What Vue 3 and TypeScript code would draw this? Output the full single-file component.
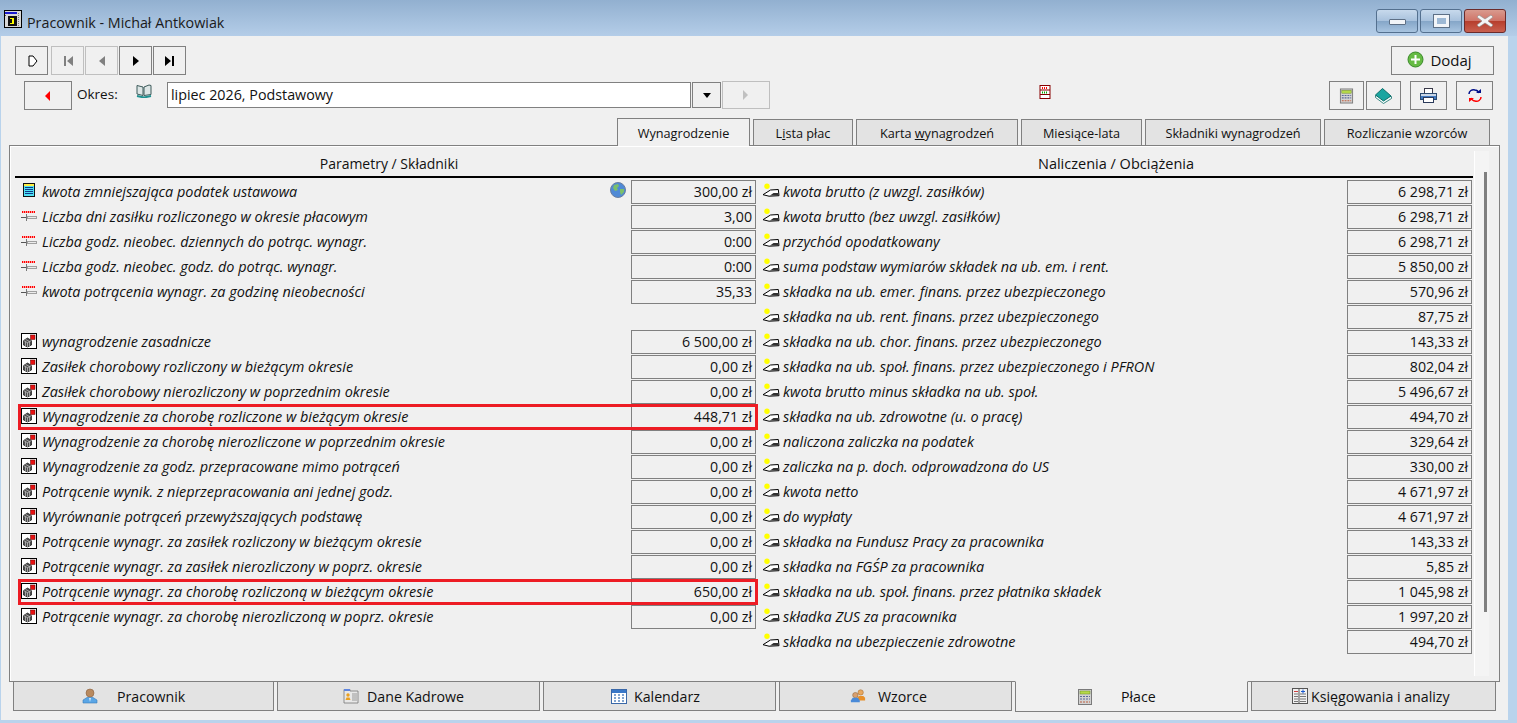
<script setup lang="ts">
interface Row {
  label: string;
  value: string;
  icon: string;
  mark?: boolean;
  globe?: boolean;
}

const navButtons = [
  { shape: 'M4 2h4l4 5-4 5H4z', outline: true, off: false },
  { shape: 'M3 2h2v10H3zM12 2v10L6 7z', off: true },
  { shape: 'M10 2v10L4 7z', off: true },
  { shape: 'M4 2v10l6-5z', off: false },
  { shape: 'M2 2v10l6-5zM9 2h2v10H9z', off: false },
];

const topTabs = [
  { before: 'Wynagrodzenie', u: '', after: '', width: 133, active: true },
  { before: 'L', u: 'i', after: 'sta płac', width: 100 },
  { before: 'Karta ', u: 'w', after: 'ynagrodzeń', width: 162 },
  { before: 'Miesiące-lata', u: '', after: '', width: 121 },
  { before: 'Składniki wynagrodzeń', u: '', after: '', width: 176 },
  { before: 'Rozliczanie wzorców', u: '', after: '', width: 166 },
];

const leftRows: (Row | null)[] = [
  { label: 'kwota zmniejszająca podatek ustawowa', value: '300,00 zł', icon: 'doc', globe: true },
  { label: 'Liczba dni zasiłku rozliczonego w okresie płacowym', value: '3,00', icon: 'param' },
  { label: 'Liczba godz. nieobec. dziennych do potrąc. wynagr.', value: '0:00', icon: 'param' },
  { label: 'Liczba godz. nieobec. godz. do potrąc. wynagr.', value: '0:00', icon: 'param' },
  { label: 'kwota potrącenia wynagr. za godzinę nieobecności', value: '35,33', icon: 'param' },
  null,
  { label: 'wynagrodzenie zasadnicze', value: '6 500,00 zł', icon: 'cube' },
  { label: 'Zasiłek chorobowy rozliczony w bieżącym okresie', value: '0,00 zł', icon: 'cube' },
  { label: 'Zasiłek chorobowy nierozliczony w poprzednim okresie', value: '0,00 zł', icon: 'cube' },
  { label: 'Wynagrodzenie za chorobę rozliczone w bieżącym okresie', value: '448,71 zł', icon: 'cube', mark: true },
  { label: 'Wynagrodzenie za chorobę nierozliczone w poprzednim okresie', value: '0,00 zł', icon: 'cube' },
  { label: 'Wynagrodzenie za godz. przepracowane mimo potrąceń', value: '0,00 zł', icon: 'cube' },
  { label: 'Potrącenie wynik. z nieprzepracowania ani jednej godz.', value: '0,00 zł', icon: 'cube' },
  { label: 'Wyrównanie potrąceń przewyższających podstawę', value: '0,00 zł', icon: 'cube' },
  { label: 'Potrącenie wynagr. za zasiłek rozliczony w bieżącym okresie', value: '0,00 zł', icon: 'cube' },
  { label: 'Potrącenie wynagr. za zasiłek nierozliczony w poprz. okresie', value: '0,00 zł', icon: 'cube' },
  { label: 'Potrącenie wynagr. za chorobę rozliczoną w bieżącym okresie', value: '650,00 zł', icon: 'cube', mark: true },
  { label: 'Potrącenie wynagr. za chorobę nierozliczoną w poprz. okresie', value: '0,00 zł', icon: 'cube' },
];

const rightRows: Row[] = [
  { label: 'kwota brutto (z uwzgl. zasiłków)', value: '6 298,71 zł', icon: 'hand' },
  { label: 'kwota brutto (bez uwzgl. zasiłków)', value: '6 298,71 zł', icon: 'hand' },
  { label: 'przychód opodatkowany', value: '6 298,71 zł', icon: 'hand' },
  { label: 'suma podstaw wymiarów składek na ub. em. i rent.', value: '5 850,00 zł', icon: 'hand' },
  { label: 'składka na ub. emer. finans. przez ubezpieczonego', value: '570,96 zł', icon: 'hand' },
  { label: 'składka na ub. rent. finans. przez ubezpieczonego', value: '87,75 zł', icon: 'hand' },
  { label: 'składka na ub. chor. finans. przez ubezpieczonego', value: '143,33 zł', icon: 'hand' },
  { label: 'składka na ub. społ. finans. przez ubezpieczonego i PFRON', value: '802,04 zł', icon: 'hand' },
  { label: 'kwota brutto minus składka na ub. społ.', value: '5 496,67 zł', icon: 'hand' },
  { label: 'składka na ub. zdrowotne (u. o pracę)', value: '494,70 zł', icon: 'hand' },
  { label: 'naliczona zaliczka na podatek', value: '329,64 zł', icon: 'hand' },
  { label: 'zaliczka na p. doch. odprowadzona do US', value: '330,00 zł', icon: 'hand' },
  { label: 'kwota netto', value: '4 671,97 zł', icon: 'hand' },
  { label: 'do wypłaty', value: '4 671,97 zł', icon: 'hand' },
  { label: 'składka na Fundusz Pracy za pracownika', value: '143,33 zł', icon: 'hand' },
  { label: 'składka na FGŚP za pracownika', value: '5,85 zł', icon: 'hand' },
  { label: 'składka na ub. społ. finans. przez płatnika składek', value: '1 045,98 zł', icon: 'hand' },
  { label: 'składka ZUS za pracownika', value: '1 997,20 zł', icon: 'hand' },
  { label: 'składka na ubezpieczenie zdrowotne', value: '494,70 zł', icon: 'hand' },
];

const bottomTabs = [
  { label: 'Pracownik', icon: 'person', width: 261, pad: 68, gap: 19 },
  { label: 'Dane Kadrowe', icon: 'card', width: 263, pad: 65, gap: 8 },
  { label: 'Kalendarz', icon: 'calendar', width: 233, pad: 67, gap: 7 },
  { label: 'Wzorce', icon: 'people', width: 233, pad: 70, gap: 12 },
  { label: 'Płace', icon: 'calc', width: 233, pad: 61, gap: 28, active: true },
  { label: 'Księgowania i analizy', icon: 'ledger', width: 245, pad: 40, gap: 3 },
];
</script>

<template>
  <div class="window">
    <svg class="sprites" width="0" height="0">
      <symbol id="doc" viewBox="0 0 14 14" shape-rendering="crispEdges">
        <rect x="1.500" y="0.500" width="11" height="13" fill="#4fe0f4" stroke="#111" />
        <rect x="2" y="1" width="10" height="2" fill="#ffee44" />
        <path d="M3 4.500h8M3 6.500h8M3 8.500h8M3 10.500h8" stroke="#103a8a" />
      </symbol>
      <symbol id="param" viewBox="0 0 16 16" shape-rendering="crispEdges">
        <rect x="1" y="2" width="13" height="2" fill="#ff9a9a" />
        <path
          d="M1 2h1v2H1zM3 2h1v2H3zM5 2h1v2H5zM7 2h1v2H7zM9 2h1v2H9zM11 2h1v2h-1zM13 2h1v2h-1z"
          fill="#ff0000"
        />
        <rect x="6.500" y="7.500" width="9" height="2" fill="#ececec" stroke="#a0a0a0" />
        <path d="M0 8.500h5" stroke="#555" />
        <path d="M5.500 5v7" stroke="#777" />
      </symbol>
      <symbol id="cube" viewBox="0 0 16 16">
        <rect x="0.500" y="0.500" width="15" height="15" fill="#fff" stroke="#000" />
        <path d="M2.500 7.500l4-2.500 4 2.500v4.500l-4 2-4-2z" fill="#4a4a4a" stroke="#000" stroke-width=".6" />
        <path d="M2.500 7.500l4 2.200 4-2.200M6.500 9.700v4.300M4.500 6.300l4 2.300M4.500 8.700v4.300M8.500 8.700v4.300" fill="none" stroke="#ddd" stroke-width=".6" />
        <rect x="9.500" y="2" width="4.500" height="4.500" fill="#e81010" stroke="#500" stroke-width=".5" />
      </symbol>
      <symbol id="hand" viewBox="0 0 18 16">
        <circle cx="5" cy="3.300" r="2.700" fill="#ffff00" />
        <path d="M1 11.700L8.500 7l7.800-.500.700 6.200-10 .500z" fill="#fff" stroke="#000" />
        <path d="M8 12.500h8.500V10h-5z" fill="#333" />
      </symbol>
      <symbol id="globe" viewBox="0 0 16 16">
        <circle cx="8" cy="8" r="7.500" fill="#4f8ad6" stroke="#6a7fa0" />
        <path d="M4 3l4-1 1 2-2 2 1 2-3 1-2-3zM10 7l4 0 0 3-3 3-1-3z" fill="#7cc06a" />
      </symbol>
      <symbol id="person" viewBox="0 0 16 16">
        <circle cx="8" cy="5" r="4" fill="#b98a5f" stroke="#8a6240" stroke-width=".6" />
        <path d="M1 15v-3l4-2.500h6l4 2.500v3z" fill="#5aa6e6" stroke="#3a7cb8" stroke-width=".6" />
        <path d="M7 10h2l-1 4z" fill="#d6ecfa" />
      </symbol>
      <symbol id="card" viewBox="0 0 16 16">
        <path d="M1 15V1.500h6V3h8v12z" fill="#e8e8e8" stroke="#777" stroke-width=".8" />
        <path d="M1 3V1h6v2z" fill="#5f86e0" />
        <circle cx="5" cy="7" r="1.700" fill="#eaa020" />
        <path d="M2.500 12l1-2.500h3l1 2.500z" fill="#eaa020" />
        <path d="M9 6h5M9 8h5M9 10h5M9 12h5" stroke="#999" />
      </symbol>
      <symbol id="calendar" viewBox="0 0 16 16">
        <rect x="0.500" y="1.500" width="15" height="14" fill="#fff" stroke="#3a68a8" />
        <rect x="1" y="2" width="14" height="3" fill="#3a78c8" />
        <path d="M3 7h2M7 7h2M11 7h2M3 10h2M7 10h2M11 10h2M3 13h2M7 13h2M11 13h2" stroke="#5a86c0" stroke-width="1.500" />
      </symbol>
      <symbol id="people" viewBox="0 0 18 16">
        <circle cx="12" cy="4" r="3" fill="#e8a860" stroke="#a06a30" stroke-width=".6" />
        <path d="M8 13v-3l2-2h5l2 2v3z" fill="#e8902a" />
        <circle cx="6" cy="7" r="3" fill="#d8a070" stroke="#906030" stroke-width=".6" />
        <path d="M1 15v-2l2-3h6l2 3v2z" fill="#4a8ad8" />
      </symbol>
      <symbol id="calc" viewBox="0 0 16 16">
        <rect x="1.500" y="0.500" width="13" height="15" fill="#d2d2d2" stroke="#7a7a7a" />
        <rect x="3" y="2" width="10" height="3" fill="#b5d94a" stroke="#6a8a20" stroke-width=".5" />
        <path d="M3 7.500h2M6 7.500h2M9 7.500h2M12 7.500h1M3 10h2M6 10h2M9 10h2M12 10h1" stroke="#5a6a9a" stroke-width="1.200" />
        <path d="M3 13h2M6 13h2M9 13h2M12 13h1" stroke="#c06040" stroke-width="1.200" />
      </symbol>
      <symbol id="ledger" viewBox="0 0 16 16">
        <rect x="0.500" y="0.500" width="15" height="15" fill="#f2f2f2" stroke="#555" />
        <path d="M2 3.500h4" stroke="#d04040" />
        <path d="M2 6h4M2 8.500h4M2 11h4M2 13.500h4M8 6h6M8 8.500h6M8 11h6M8 13.500h6" stroke="#777" />
        <path d="M7 1v14" stroke="#555" />
        <path d="M9 3.500h4M11 1.500v4" stroke="#1a5ad0" />
      </symbol>
    </svg>

    <header class="titlebar">
      <svg class="app-icon" width="18" height="18" viewBox="0 0 18 18">
        <rect x="0.500" y="0.500" width="17" height="17" fill="#d8d8d8" stroke="#000" />
        <rect x="1" y="2" width="12" height="2" fill="#1a1ad0" />
        <rect x="1" y="5" width="1" height="1" fill="#555" />
        <rect x="4" y="6" width="9" height="10" fill="#111" />
        <path d="M6 8h4v6H6v-1h2V9H6z" fill="#ff0" />
        <path d="M14.500 3v13" stroke="#777" stroke-dasharray="1 1" />
      </svg>
      <span class="title">Pracownik - Michał Antkowiak</span>
      <div class="caption-buttons">
        <button class="cap"><span class="cap-min"></span></button>
        <button class="cap"><span class="cap-max"></span></button>
        <button class="cap cap-close">
          <svg width="18" height="14" viewBox="0 0 18 14">
            <path d="M3 1l6 4 6-4 2 2-5 4 5 4-2 2-6-4-6 4-2-2 5-4-5-4z" fill="#f4f4f4" stroke="#8a8a8a" stroke-width=".6" />
          </svg>
        </button>
      </div>
    </header>

    <main class="client">
      <div class="toolbar-one">
        <div class="nav-group">
          <button v-for="(b, i) in navButtons" :key="i" class="btn nav-btn" :class="{ off: b.off }">
            <svg width="14" height="14" viewBox="0 0 14 14">
              <path :d="b.shape" :fill="b.outline ? '#fff' : b.off ? '#808080' : '#000'" :stroke="b.outline ? '#000' : 'none'" />
            </svg>
          </button>
        </div>
        <button class="btn add-btn">
          <svg width="17" height="17" viewBox="0 0 17 17">
            <circle cx="8.500" cy="8.500" r="7.500" fill="#66bb44" stroke="#3a8a2a" />
            <path d="M8.500 4v9M4 8.500h9" stroke="#fff" stroke-width="2" />
          </svg>
          Dodaj
        </button>
      </div>

      <div class="toolbar-two">
        <button class="btn back-btn">
          <svg width="8" height="12" viewBox="0 0 8 12"><path d="M6 1v10L1 6z" fill="#f00" /></svg>
        </button>
        <span class="period-label">Okres:</span>
        <svg class="book" width="16" height="14" viewBox="0 0 16 14">
          <path d="M1 1.500l6 1.500v8.500l-6-1.500zM8 3l5-2 2 .5v9L8 11.500z" fill="#dde6e6" stroke="#3c5a5a" />
          <path d="M1 12l7 1.500 7-1.500" stroke="#1f9090" stroke-width="2" fill="none" />
        </svg>
        <div class="combo-field">lipiec 2026, Podstawowy</div>
        <button class="btn combo-arrow">
          <svg width="8" height="5" viewBox="0 0 8 5"><path d="M0 0h8L4 5z" fill="#000" /></svg>
        </button>
        <button class="btn next-btn off">
          <svg width="6" height="12" viewBox="0 0 6 12"><path d="M0 1v10l5-5z" fill="#c0c0c0" /></svg>
        </button>
        <svg class="abacus" width="12" height="14" viewBox="0 0 12 14">
          <rect x="1" y="0.500" width="10" height="13" fill="#fff" stroke="#800" />
          <path d="M1 5h10M1 9.500h10" stroke="#800" />
          <path d="M3 3h6" stroke="#f00" stroke-dasharray="1 1" stroke-width="2" />
          <path d="M3 7.500h6" stroke="#0a0" stroke-dasharray="1 1" stroke-width="2" />
        </svg>
        <button class="btn tool-btn tool-calc"><svg width="15" height="16"><use href="#calc" /></svg></button>
        <button class="btn tool-btn tool-book">
          <svg width="17" height="16" viewBox="0 0 17 16">
            <path d="M0.500 7.500v2l8 6 8-5v-2z" fill="#f4fbfa" stroke="#0f6f6a" stroke-width=".8" />
            <path d="M0.500 7L7.500 0.500 16 8l-7.500 5z" fill="#1aa5a0" stroke="#0f6f6a" />
          </svg>
        </button>
        <button class="btn tool-btn tool-print">
          <svg width="17" height="17" viewBox="0 0 17 17" shape-rendering="crispEdges">
            <rect x="4.500" y="1.500" width="8" height="6" fill="#fff" stroke="#3a3a4a" />
            <rect x="0.500" y="6.500" width="16" height="6" fill="#c9d6e6" stroke="#2a4a70" />
            <rect x="1" y="9" width="15" height="3" fill="#3f78c0" />
            <rect x="3.500" y="10.500" width="10" height="5" fill="#fff" stroke="#2a3a5a" />
          </svg>
        </button>
        <button class="btn tool-btn tool-refresh">
          <svg width="14" height="15" viewBox="0 0 14 15" fill="none">
            <path d="M1 6c0-3 3-5 6-4 2 0 3 1 4 3" stroke="#00108a" stroke-width="1.500" />
            <path d="M8 5h5V1z" fill="#00108a" />
            <path d="M13 9c0 3-3 5-6 4-2 0-3-1-4-3" stroke="#f00" stroke-width="1.500" />
            <path d="M6 10H1v4z" fill="#f00" />
          </svg>
        </button>
      </div>

      <nav class="top-tabs">
        <div
          v-for="t in topTabs"
          :key="t.before"
          class="top-tab"
          :class="{ active: t.active }"
          :style="{ width: t.width + 'px' }"
        >
          {{ t.before }}<u v-if="t.u">{{ t.u }}</u>{{ t.after }}
        </div>
      </nav>

      <section class="panel">
        <div class="columns">
          <div class="col col-left">
            <h3 class="col-head head-left">Parametry / Składniki</h3>
            <template v-for="(r, i) in leftRows" :key="i">
              <div v-if="r" class="row" :class="{ marked: r.mark }">
                <svg class="row-icon" :class="'ic-' + r.icon"><use :href="'#' + r.icon" /></svg>
                <span class="row-label">{{ r.label }}</span>
                <svg v-if="r.globe" class="globe"><use href="#globe" /></svg>
                <span class="row-value">{{ r.value }}</span>
              </div>
              <div v-else class="row"></div>
            </template>
          </div>
          <div class="col col-right">
            <h3 class="col-head head-right">Naliczenia / Obciążenia</h3>
            <div v-for="r in rightRows" :key="r.label" class="row">
              <svg class="row-icon ic-hand"><use href="#hand" /></svg>
              <span class="row-label">{{ r.label }}</span>
              <span class="row-value">{{ r.value }}</span>
            </div>
          </div>
        </div>
        <div class="scrollbar"><div class="thumb"></div></div>
      </section>

      <nav class="bottom-tabs">
        <div
          v-for="t in bottomTabs"
          :key="t.label"
          class="bottom-tab"
          :class="{ active: t.active }"
          :style="{ width: t.width + 'px', paddingLeft: t.pad + 'px', gap: t.gap + 'px' }"
        >
          <svg width="16" height="16"><use :href="'#' + t.icon" /></svg>
          <span>{{ t.label }}</span>
        </div>
      </nav>
    </main>
  </div>
</template>

<style>
html,
body {
  margin: 0;
  overflow: hidden;
}
</style>

<style scoped>
.window {
  width: 1517px;
  height: 723px;
  background: #b9d3ec;
  font-family: "Open Sans", "Noto Sans", sans-serif;
  font-size: 13.5px;
  color: #111;
  overflow: hidden;
}

.sprites {
  position: absolute;
}

.titlebar {
  height: 36px;
  display: flex;
  align-items: center;
  padding-left: 4px;
  box-sizing: border-box;
  background: linear-gradient(#92b0d0, #b4cde8);
}

.app-icon {
  margin-top: 2px;
}

.title {
  margin-left: 5px;
  margin-top: 8px;
  font-size: 14.3px;
  color: #1a1a1a;
}

.caption-buttons {
  margin-left: auto;
  margin-right: 11px;
  margin-top: 6px;
  display: flex;
  gap: 2px;
}

.cap {
  width: 42px;
  height: 24px;
  padding: 0;
  border: 1px solid #54708f;
  border-radius: 3px;
  background: linear-gradient(#c7d9ec 0, #a9c2dd 48%, #84a5c7 50%, #a8c4e0 100%);
  display: flex;
  align-items: center;
  justify-content: center;
}

.cap-close {
  border-color: #6b2b2b;
  background: linear-gradient(#d99a8e 0, #cf7468 48%, #b63d2c 50%, #c9604f 100%);
}

.cap-min {
  width: 15px;
  height: 4px;
  background: #f1f4f8;
  border: 1px solid #5d6f85;
  border-radius: 1px;
  margin-top: 1px;
}

.cap-max {
  box-sizing: border-box;
  width: 15px;
  height: 12px;
  border: 3px solid #f1f4f8;
  outline: 1px solid #5d6f85;
  background: #9db8d4;
}

.client {
  margin-left: 1px;
  width: 1507px;
  height: 684px;
  background: #f0f0f0;
  overflow: hidden;
}

.btn {
  box-sizing: border-box;
  padding: 0;
  background: #f0f0f0;
  border: 1px solid #808080;
  font-family: inherit;
  color: #111;
  display: flex;
  align-items: center;
  justify-content: center;
}

.btn.off {
  border-color: #bfbfbf;
}

.toolbar-one {
  display: flex;
  justify-content: space-between;
  height: 29px;
  margin-top: 10px;
  padding: 0 14px;
}

.nav-group {
  display: flex;
  gap: 1px;
}

.nav-btn {
  width: 33px;
  height: 29px;
}

.nav-btn:first-child {
  margin-right: 2px;
}

.add-btn {
  width: 103px;
  height: 29px;
  gap: 6px;
  padding: 0 6px 2px 0;
  font-size: 15px;
}

.toolbar-two {
  display: flex;
  align-items: flex-start;
  height: 29px;
  margin-top: 6px;
  padding-left: 23px;
}

.back-btn {
  width: 48px;
  height: 29px;
}

.period-label {
  margin: 4px 0 0 5px;
  width: 59px;
}

.book {
  margin-top: 3px;
}

.combo-field {
  box-sizing: border-box;
  width: 524px;
  height: 26px;
  margin: 1px 0 0 15px;
  background: #fff;
  border: 1px solid #808080;
  padding-left: 3px;
  line-height: 24px;
  font-size: 14.3px;
}

.combo-arrow {
  width: 29px;
  height: 26px;
  margin: 1px 0 0 1px;
}

.next-btn {
  width: 48px;
  height: 28px;
  margin-left: 1px;
}

.abacus {
  margin: 4px 0 0 269px;
}

.tool-btn {
  height: 29px;
}

.tool-calc {
  width: 35px;
  margin-left: 278px;
}

.tool-book {
  width: 35px;
  margin-left: 2px;
}

.tool-print {
  width: 37px;
  margin-left: 9px;
}

.tool-refresh {
  width: 37px;
  margin-left: 9px;
}

.top-tabs {
  display: flex;
  align-items: flex-end;
  gap: 3px;
  height: 28px;
  margin-top: 7px;
  padding-left: 616px;
  position: relative;
  z-index: 1;
}

.top-tab {
  box-sizing: border-box;
  height: 26px;
  background: #e3e3e3;
  border: 1px solid #808080;
  border-bottom: none;
  text-align: center;
  line-height: 27px;
  font-size: 12.7px;
}

.top-tab.active {
  height: 28px;
  background: #f0f0f0;
  margin-bottom: -1px;
  line-height: 29px;
}

.panel {
  box-sizing: border-box;
  position: relative;
  width: 1491px;
  height: 537px;
  margin-left: 8px;
  border: 1px solid #808080;
  box-shadow: inset 1px 1px 0 #fff;
  padding: 6px 0 0 5px;
}

.columns {
  display: flex;
}

.col-left {
  width: 748px;
}

.col-right {
  width: 710px;
}

.col-head {
  margin: 0 0 1px;
  height: 26px;
  box-sizing: border-box;
  border-bottom: 2px solid #000;
  text-align: center;
  font-weight: 400;
  line-height: 24px;
}

.head-left {
  font-size: 14px;
}

.head-right {
  padding-right: 4px;
  font-size: 14.5px;
}

.row {
  display: flex;
  align-items: center;
  height: 25px;
  box-sizing: border-box;
}

.col-left .row {
  width: 738px;
  margin-left: 4px;
}

.col-right .row {
  margin-left: -2px;
}

.marked {
  position: relative;
}

.marked::after {
  content: "";
  position: absolute;
  inset: 0 -1px -1px -1px;
  border: 3px solid #ed1c24;
  pointer-events: none;
}

.row-icon {
  flex: none;
}

.ic-doc {
  width: 14px;
  height: 14px;
  margin: 0 6px 3px 3px;
}

.ic-param {
  width: 16px;
  height: 16px;
  margin: 1px 5px 0 2px;
}

.ic-cube {
  width: 16px;
  height: 16px;
  margin: 0 5px 1px 2px;
}

.ic-hand {
  width: 18px;
  height: 16px;
  margin: -1px 4px 0 1px;
}

.row-label {
  flex: 1;
  font-size: 14.45px;
  font-style: italic;
  white-space: nowrap;
}

.col-right .row-label {
  margin-left: -1px;
}

.globe {
  width: 16px;
  height: 16px;
  margin: 0 5px 3px 0;
}

.row-value {
  box-sizing: border-box;
  flex: none;
  width: 125px;
  height: 24px;
  margin-right: 1px;
  padding-right: 3px;
  border: 1px solid #808080;
  text-align: right;
  line-height: 22px;
  font-size: 14.2px;
}

.scrollbar {
  position: absolute;
  top: 5px;
  right: 10px;
  bottom: 5px;
  width: 15px;
  background: #f4f4f4;
  box-shadow: inset 1px 0 0 #fff;
}

.thumb {
  position: absolute;
  top: 21px;
  right: 2px;
  width: 3px;
  height: 440px;
  background: #808080;
}

.bottom-tabs {
  display: flex;
  gap: 3px;
  padding-left: 12px;
  margin-top: -1px;
  position: relative;
}

.bottom-tab {
  box-sizing: border-box;
  height: 30px;
  display: flex;
  align-items: center;
  background: #e3e3e3;
  border: 1px solid #808080;
  font-size: 14.2px;
}

.bottom-tab.active {
  height: 31px;
  background: #f0f0f0;
  border-top-color: #f0f0f0;
}
</style>
